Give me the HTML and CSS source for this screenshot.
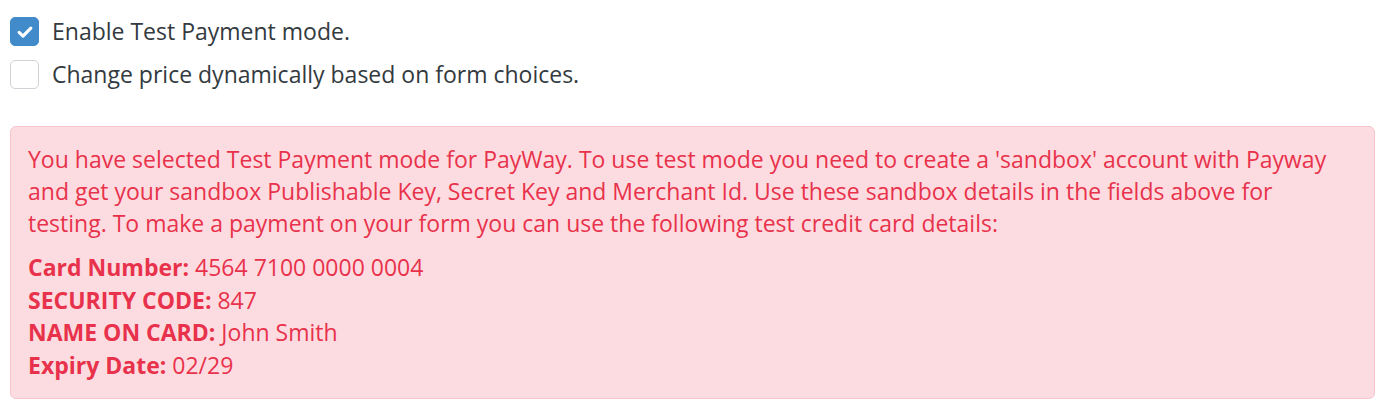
FILE: index.html
```html
<!DOCTYPE html>
<html lang="en">
<head>
    <meta charset="UTF-8">
    <title>Test Payment</title>
    <link rel="stylesheet" href="styles.css">
</head>
<body>
    <div class="options">
        <label class="check-row">
            <span class="box checked">
                <svg width="18" height="18" viewBox="0 0 16 16"><path d="M2.8 8.4l3.4 3.2L13.2 4.6" fill="none" stroke="#fff" stroke-width="2.8" stroke-linecap="round" stroke-linejoin="round"/></svg>
            </span>
            Enable Test Payment mode.
        </label>
        <label class="check-row">
            <span class="box"></span>
            Change price dynamically based on form choices.
        </label>
    </div>

    <div class="alert">
        <p class="intro">You have selected Test Payment mode for PayWay. To use test mode you need to create a 'sandbox' account with Payway and get your sandbox Publishable Key, Secret Key and Merchant Id. Use these sandbox details in the fields above for testing. To make a payment on your form you can use the following test credit card details:</p>
        <div class="card-details">
            <div><b>Card Number:</b> 4564 7100 0000 0004</div>
            <div><b>SECURITY CODE:</b> 847</div>
            <div><b>NAME ON CARD:</b> John Smith</div>
            <div><b>Expiry Date:</b> 02/29</div>
        </div>
    </div>
</body>
</html>
```

FILE: styles.css
```css
* {
    margin: 0;
    padding: 0;
    box-sizing: border-box;
}
body {
    font-family: "Open Sans", sans-serif;
    font-size: 23px;
    color: #333a40;
    background-color: #ffffff;
    padding: 17px 4px 0 10px;
}
.options {
    display: flex;
    flex-direction: column;
    gap: 14px;
    margin-bottom: 37px;
}
.check-row {
    display: flex;
    align-items: center;
    gap: 13px;
    line-height: 29px;
}
.box {
    width: 29px;
    height: 29px;
    border: 1px solid #cfd3d7;
    border-radius: 5px;
    background-color: #fff;
    display: flex;
    align-items: center;
    justify-content: center;
}
.box.checked {
    background-color: #428bca;
    border-color: #428bca;
}
.alert {
    background-color: #fddce1;
    border: 1px solid #f8c5cd;
    border-radius: 6px;
    color: #e8324b;
    padding: 16px 17px;
    line-height: 32px;
}
.intro {
    margin-bottom: 12px;
}
.card-details b {
    font-weight: 700;
}
.card-details div {
    line-height: 32.7px;
}
```
